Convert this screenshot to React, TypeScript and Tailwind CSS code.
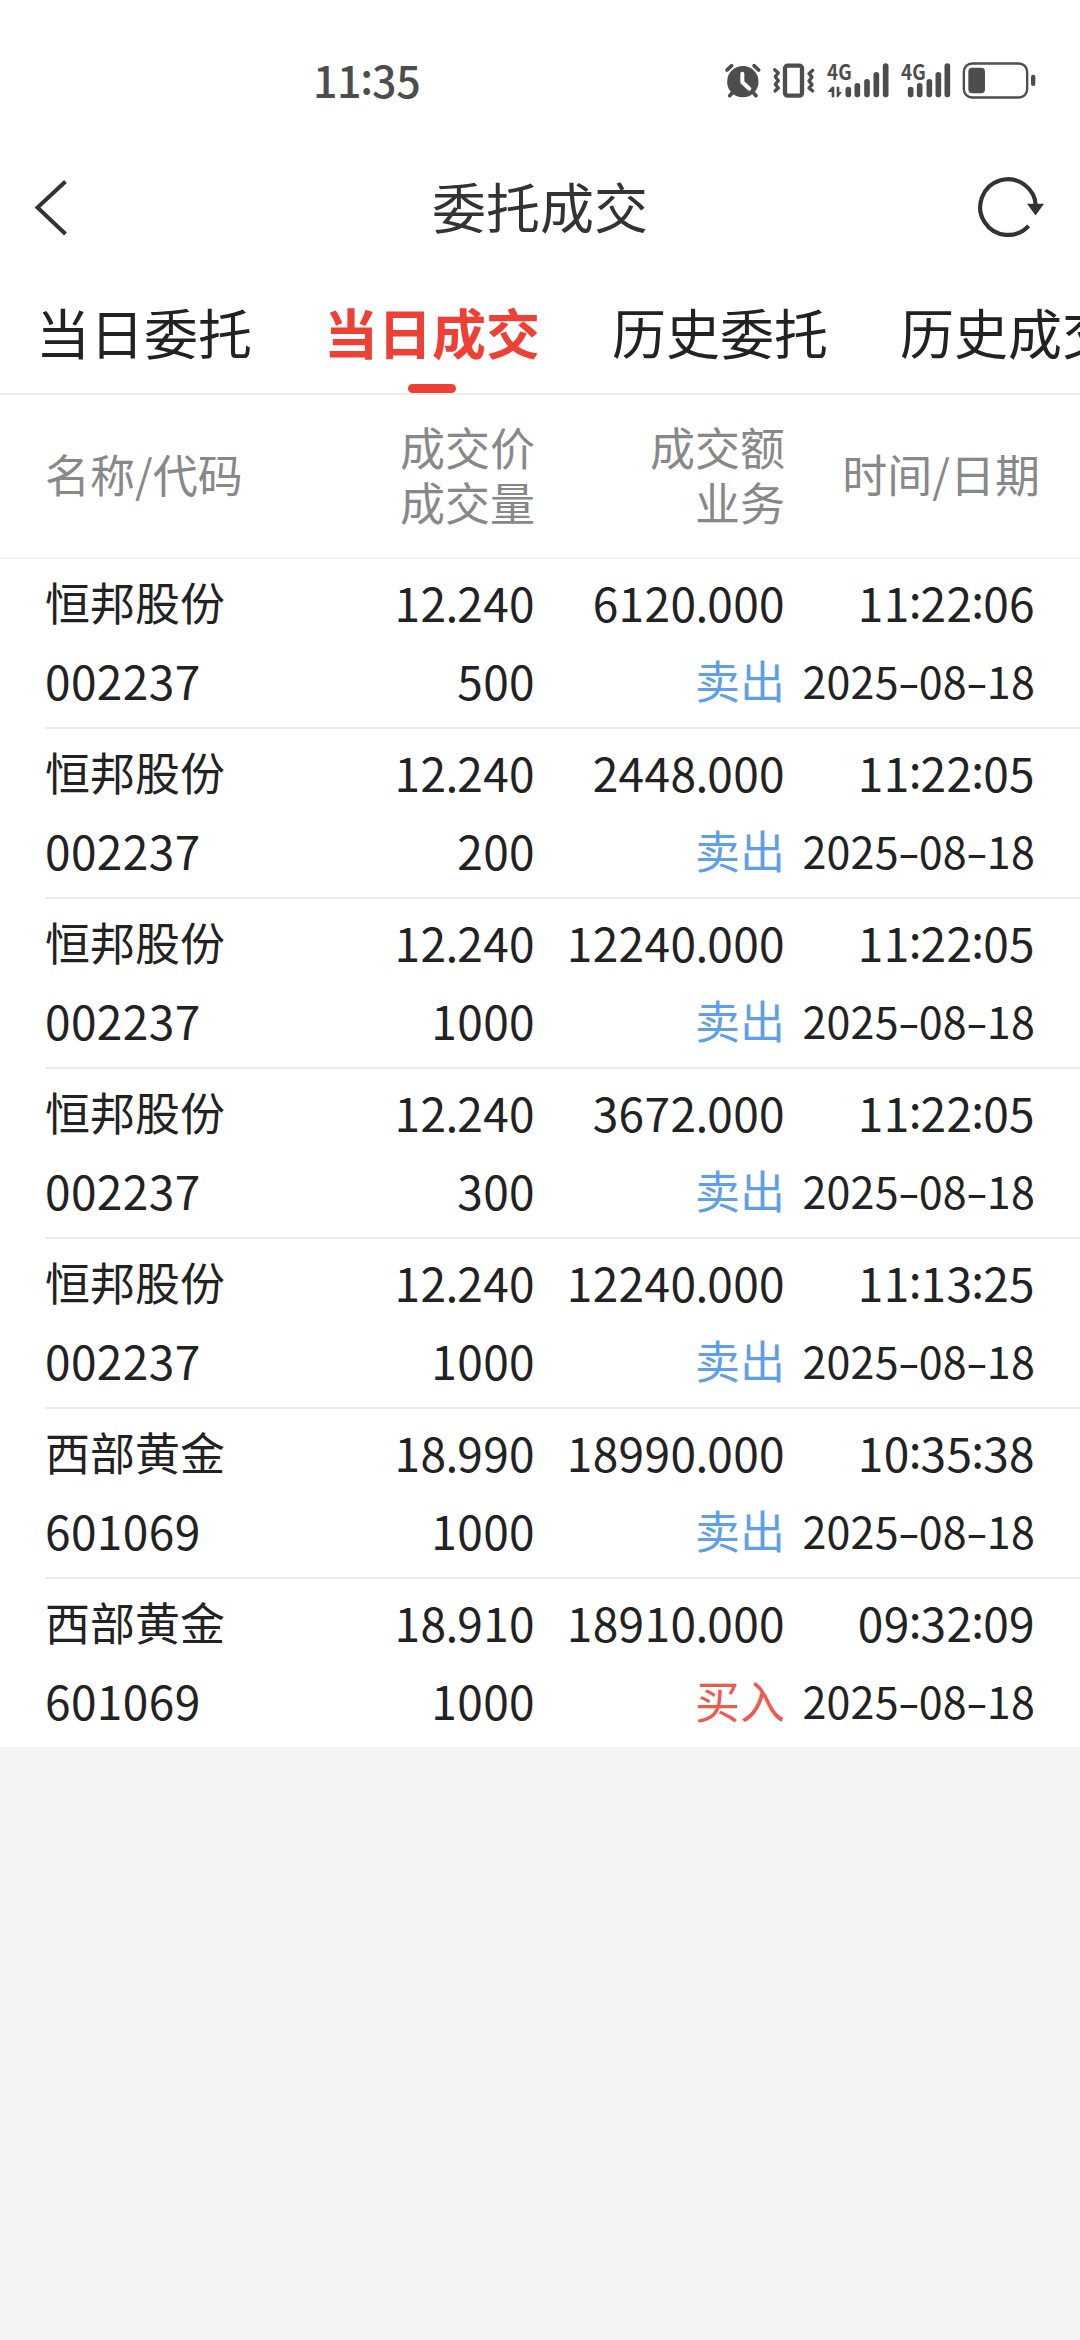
import { Fragment, useState } from 'react';

interface Trade {
  name: string;
  code: string;
  price: string;
  volume: string;
  amount: string;
  side: '卖出' | '买入';
  time: string;
  date: string;
}

const TABS = ['当日委托', '当日成交', '历史委托', '历史成交'];

const TRADES: Trade[] = [
  { name: '恒邦股份', code: '002237', price: '12.240', volume: '500', amount: '6120.000', side: '卖出', time: '11:22:06', date: '2025-08-18' },
  { name: '恒邦股份', code: '002237', price: '12.240', volume: '200', amount: '2448.000', side: '卖出', time: '11:22:05', date: '2025-08-18' },
  { name: '恒邦股份', code: '002237', price: '12.240', volume: '1000', amount: '12240.000', side: '卖出', time: '11:22:05', date: '2025-08-18' },
  { name: '恒邦股份', code: '002237', price: '12.240', volume: '300', amount: '3672.000', side: '卖出', time: '11:22:05', date: '2025-08-18' },
  { name: '恒邦股份', code: '002237', price: '12.240', volume: '1000', amount: '12240.000', side: '卖出', time: '11:13:25', date: '2025-08-18' },
  { name: '西部黄金', code: '601069', price: '18.990', volume: '1000', amount: '18990.000', side: '卖出', time: '10:35:38', date: '2025-08-18' },
  { name: '西部黄金', code: '601069', price: '18.910', volume: '1000', amount: '18910.000', side: '买入', time: '09:32:09', date: '2025-08-18' },
];

// Tightens the dots and colons, widens the dashes between digit groups
const Digits = ({ value }: { value: string }) => (
  <>
    {value.split(/([.:-])/).map((part, i) => {
      if (part === '-') {
        return (
          <span key={i} className="inline-block w-[20px] scale-x-150 text-center tracking-normal">
            -
          </span>
        );
      }
      if (part === ':') {
        return (
          <span key={i} className="relative -top-[4px] -ml-px -mr-px tracking-normal">
            :
          </span>
        );
      }
      if (part === '.') {
        return (
          <span key={i} className="-ml-px -mr-px tracking-normal">
            .
          </span>
        );
      }
      return <Fragment key={i}>{part}</Fragment>;
    })}
  </>
);

const SignalIcon = ({ x, bars }: { x: number; bars: number[][] }) => (
  <>
    <text x={x} y="121" fontSize="63" fontWeight="700" textLength="74" lengthAdjust="spacingAndGlyphs" fill="#4d4d4d">
      4G
    </text>
    {bars.map(([cx, top]) => (
      <rect key={cx} x={cx - 8.5} y={top} width="17" height={172 - top} rx="8.5" fill="#4d4d4d" />
    ))}
  </>
);

const StatusBar = () => (
  <div className="flex h-[141px] items-start justify-between pl-[313px] pr-[43px] text-[#4d4d4d]">
    <span className="pt-[49px] text-[43px] font-medium leading-[60px] tracking-[-0.4px]">
      <Digits value="11:35" />
    </span>
    <div className="flex gap-2 pt-[60px]">
      <svg className="h-10 w-10" viewBox="70 60 120 120" fill="none" strokeLinecap="round">
        <circle cx="129.500" cy="125" r="47" fill="#4d4d4d" />
        <path d="M82 90l14-13M163 77l14 13" stroke="#4d4d4d" strokeWidth="11" />
        <path d="M100 156l-10 11M159 156l10 11" stroke="#4d4d4d" strokeWidth="11" />
        <path d="M128 101v26l21 19" stroke="#fff" strokeWidth="12" strokeLinejoin="round" />
      </svg>
      <svg className="h-10 w-[46px]" viewBox="214 60 138 120" fill="none" stroke="#4d4d4d" strokeLinecap="round" strokeLinejoin="round">
        <rect x="256" y="77" width="51" height="90" rx="8" strokeWidth="13" />
        <path d="M225 89l11 10-9 11 9 12-9 11 9 11-10 9" strokeWidth="10" />
        <path d="M339 91l-11 10 9 10-9 12 9 11-9 10 11 9" strokeWidth="10" />
      </svg>
      <svg className="h-10 w-[66px] overflow-visible" viewBox="376 60 198 120">
        <SignalIcon x={382} bars={[[446, 140], [473, 129], [502, 117], [530, 96], [558, 70]]} />
        <path d="M383 156l14-16h7v32h-8v-16zM411 140h8v16h8l-12 16h-4z" fill="#4d4d4d" />
      </svg>
      <svg className="h-10 w-[54px] overflow-visible" viewBox="598 60 162 120">
        <SignalIcon x={604} bars={[[633, 140], [660, 129], [689, 117], [716, 96], [743, 70]]} />
      </svg>
      <svg className="h-10 w-[76px]" viewBox="784 60 228 120" fill="#4d4d4d">
        <rect x="792.500" y="70.500" width="190" height="102" rx="25" fill="none" stroke="#4d4d4d" strokeWidth="7" />
        <rect x="806" y="83" width="50" height="77" rx="12" />
        <rect x="994" y="104" width="13" height="34" rx="6" />
      </svg>
    </div>
  </div>
);

const App = () => {
  const [activeTab, setActiveTab] = useState(1);

  return (
    <div className="min-h-[2340px] w-[1080px] overflow-hidden bg-[#f4f4f4] font-['Noto_Sans_CJK_SC',sans-serif] text-[#222]" lang="zh-CN">
      <div className="bg-white">
        <StatusBar />

        <header className="flex h-[126px] items-center justify-between pl-[30px] pr-[30px] text-[#333]">
          <button type="button" aria-label="返回">
            <svg className="mt-[6px] h-[66px] w-[84px]" viewBox="30 174 84 66" fill="none" stroke="#333" strokeWidth="4">
              <path d="M65.500 181.500L37.500 207.500L65.500 234" />
            </svg>
          </button>
          <h1 className="pt-[3px] text-[54px] font-normal leading-none">委托成交</h1>
          <button type="button" aria-label="刷新">
            <svg className="mt-[6px] h-[66px] w-[84px]" viewBox="966 174 84 66">
              <path d="M1035.800 206A27.800 27.800 0 1 0 1028.600 225.800" fill="none" stroke="#333" strokeWidth="4.200" />
              <path d="M1027 203.700h17l-8.500 11.800z" fill="#333" />
            </svg>
          </button>
        </header>

        <nav className="flex h-[128px] gap-[72px] overflow-hidden border-b-2 border-[#ececec] pl-9 text-[54px]">
          {TABS.map((tab, i) => (
            <button
              key={tab}
              type="button"
              onClick={() => setActiveTab(i)}
              className={`flex w-[216px] shrink-0 flex-col items-center whitespace-nowrap ${
                activeTab === i ? 'font-bold text-[#ef4035]' : 'text-[#222]'
              }`}
            >
              <span className="h-[117px] leading-[129px]">{tab}</span>
              {activeTab === i && <span className="h-[9px] w-12 rounded-full bg-[#ef4035]" />}
            </button>
          ))}
        </nav>

        <div className="flex h-[164px] items-center border-b-2 border-[#f4f4f4] pb-[5px] pl-[45px] text-[45px] leading-[55px] text-[#888]">
          <div className="w-[240px]">名称/代码</div>
          <div className="w-[250px] text-right">
            <div>成交价</div>
            <div>成交量</div>
          </div>
          <div className="w-[250px] text-right">
            <div>成交额</div>
            <div>业务</div>
          </div>
          <div className="w-[255px] text-right">时间/日期</div>
        </div>

        {TRADES.map((trade, i) => (
          <div
            key={i}
            className={`ml-[45px] flex pt-[4px] text-[46px] leading-[78px] tracking-[0.4px] ${
              i < TRADES.length - 1 ? 'h-[170px] border-b-2 border-[#ececec]' : 'h-[168px]'
            }`}
          >
            <div className="w-[240px]">
              <div className="text-[45px] tracking-normal">{trade.name}</div>
              <div>{trade.code}</div>
            </div>
            <div className="w-[250px] text-right">
              <div>
                <Digits value={trade.price} />
              </div>
              <div>{trade.volume}</div>
            </div>
            <div className="w-[250px] text-right">
              <div>
                <Digits value={trade.amount} />
              </div>
              <div className={`text-[45px] tracking-normal ${trade.side === '卖出' ? 'text-[#5f9fe8]' : 'text-[#ec5b50]'}`}>
                {trade.side}
              </div>
            </div>
            <div className="w-[250px] text-right">
              <div>
                <Digits value={trade.time} />
              </div>
              <div className="whitespace-nowrap text-[43px] tracking-[0.2px]">
                <Digits value={trade.date} />
              </div>
            </div>
          </div>
        ))}
      </div>
    </div>
  );
};

export default App;
